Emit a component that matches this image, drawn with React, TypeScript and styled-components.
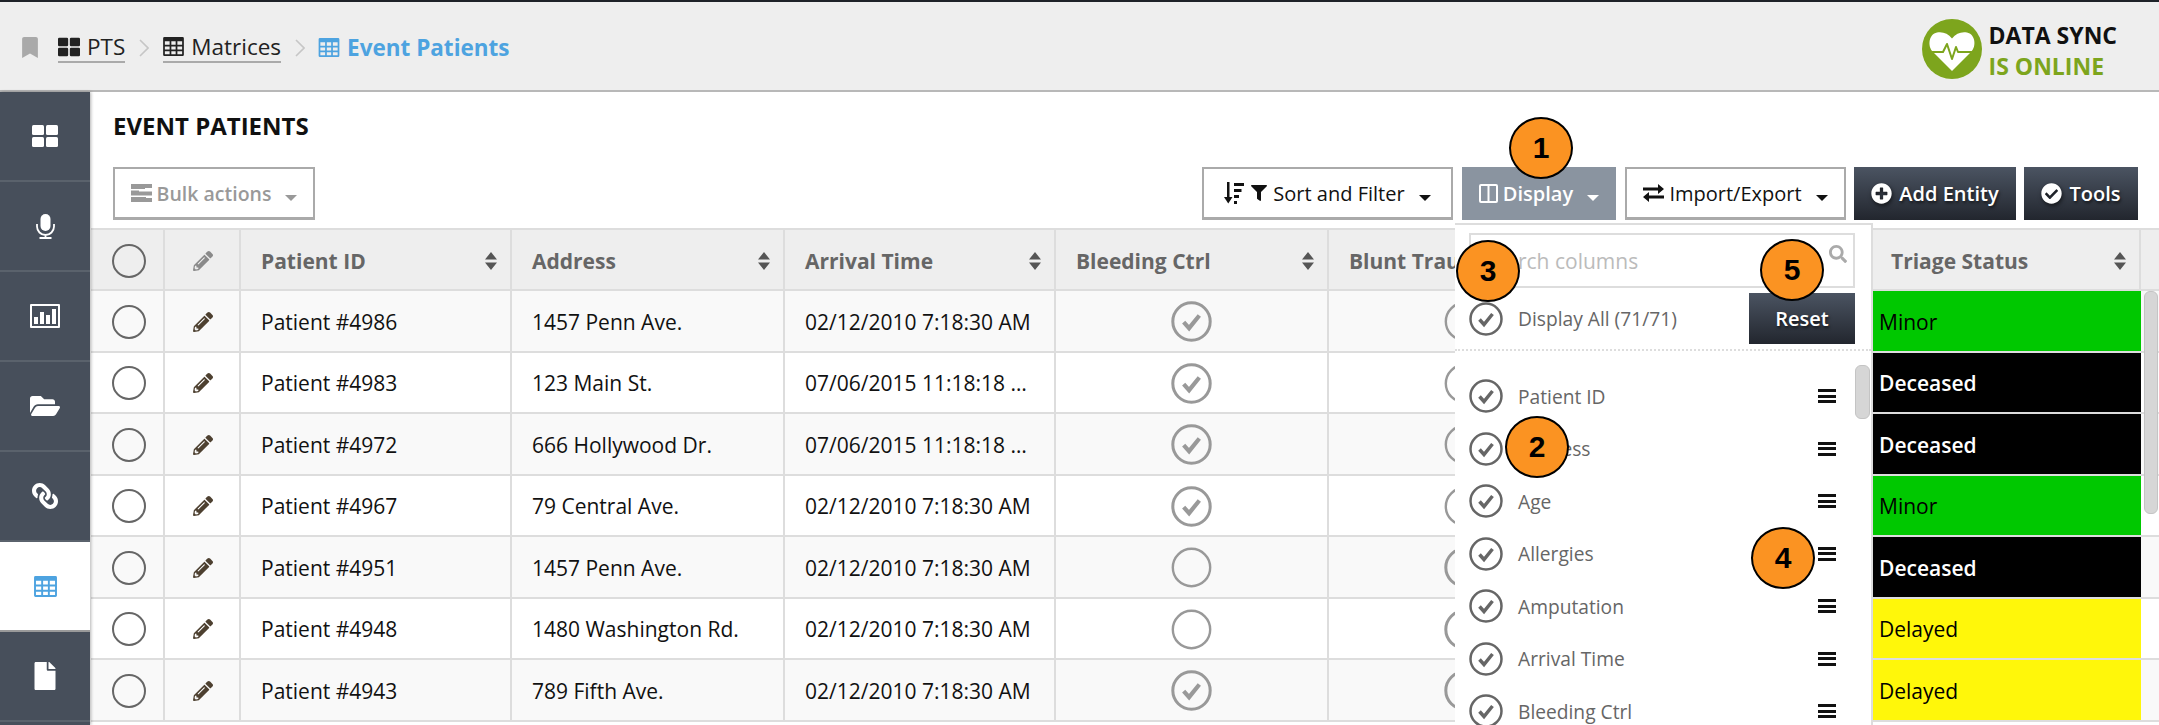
import React from 'react';
import styled, { createGlobalStyle } from 'styled-components';
import {
  FaBookmark,
  FaCheckCircle,
  FaFile,
  FaFilter,
  FaFolderOpen,
  FaLink,
  FaPencilAlt,
  FaPlusCircle,
  FaSearch,
} from 'react-icons/fa';

const COLUMNS = '74px 76px 271px 273px 271px 273px 272px 272px 268px 18px';

const GlobalStyle = createGlobalStyle`
  html, body { margin: 0; padding: 0; background: #fff; }
  body { font-family: "Open Sans", "Liberation Sans", sans-serif; }
  * { box-sizing: border-box; }
`;

const Page = styled.div`
  position: relative;
  width: 2159px;
  height: 725px;
  overflow: hidden;
  background: #fff;
`;

/* ---------- top bar ---------- */
const TopBar = styled.header`
  height: 92px;
  display: flex;
  align-items: center;
  justify-content: space-between;
  padding: 0 42px 0 21px;
  background: #eee;
  border-top: 2px solid #1e2228;
  border-bottom: 2px solid #b8b8b8;
`;

const Breadcrumbs = styled.nav`
  display: flex;
  align-items: center;
  height: 46px;
  margin-top: 3px;
`;

const BookmarkMark = styled(FaBookmark)`
  width: 18px;
  height: 21px;
  color: #a9a9a9;
  margin-right: 19px;
`;

const Crumb = styled.a`
  display: flex;
  align-items: center;
  gap: 7px;
  height: 30px;
  font-size: 22.5px;
  color: #222;
  border-bottom: 2px solid #aaa;
`;

const CrumbSep = styled.svg`
  width: 10px;
  height: 18px;
  margin: 0 14px;
  fill: none;
  stroke: #c6c6c6;
  stroke-width: 1.6;
`;

const CurrentCrumb = styled.span`
  display: flex;
  align-items: center;
  gap: 7px;
  margin-left: -1px;
  font-size: 22.5px;
  font-weight: 700;
  color: #4da3e0;
`;

const SyncBadge = styled.div`
  display: flex;
  align-items: center;
  gap: 7px;
  margin-top: 6px;
`;

const SyncText = styled.div`
  padding-top: 3px;
  font-size: 23px;
  font-weight: 700;
  line-height: 31px;
  color: #111;
`;

const SyncState = styled.div`
  color: #7da51d;
`;

/* ---------- sidebar ---------- */
const Body = styled.div`
  display: flex;
  height: 633px;
`;

const Sidebar = styled.aside`
  flex: 0 0 90px;
  background: #474f5b;
  box-shadow: 1px 0 3px rgba(0, 0, 0, 0.3);
  z-index: 1;
`;

const SideItem = styled.div<{ $active?: boolean }>`
  height: 90px;
  display: flex;
  align-items: center;
  justify-content: center;
  border-bottom: 2px solid ${p => (p.$active ? '#9a9a9a' : '#5a626c')};
  background: ${p => (p.$active ? '#fff' : 'transparent')};
  color: ${p => (p.$active ? '#4da3e0' : '#fff')};
`;

const ChainIcon = styled(FaLink)`
  width: 26px;
  height: 26px;
  transform: scaleX(-1);
`;

/* ---------- main ---------- */
const Main = styled.main`
  flex: 1;
  margin-left: 1px;
  min-width: 0;
`;

const PageTitle = styled.h1`
  height: 66px;
  margin: 0;
  padding-left: 22px;
  display: flex;
  align-items: center;
  font-size: 24px;
  font-weight: 700;
  color: #111;
`;

const Toolbar = styled.div`
  display: flex;
  justify-content: space-between;
  margin-top: 9px;
  padding: 0 21px 0 22px;
`;

const ToolGroup = styled.div`
  display: flex;
  gap: 8px;
`;

const OutlineButton = styled.button<{ $w: number; $muted?: boolean }>`
  width: ${p => p.$w}px;
  height: 53px;
  display: flex;
  align-items: center;
  justify-content: center;
  gap: 5px;
  padding: 0;
  background: #fff;
  border: 2px solid #aaa;
  border-bottom-width: 3px;
  font-family: inherit;
  font-size: ${p => (p.$muted ? 19.5 : 20)}px;
  font-weight: ${p => (p.$muted ? 600 : 400)};
  color: ${p => (p.$muted ? '#999' : '#111')};
`;

const ActiveButton = styled(OutlineButton)`
  background: #8a94a0;
  border-color: #8a94a0;
  color: #fff;
  font-weight: 600;
  margin: 0 1px;
`;

const DarkButton = styled.button<{ $w: number }>`
  width: ${p => p.$w}px;
  height: 53px;
  display: flex;
  align-items: center;
  justify-content: center;
  gap: 7px;
  padding: 0;
  border: 0;
  background: linear-gradient(#4b5462, #22262e);
  font-family: inherit;
  font-size: 20px;
  font-weight: 600;
  color: #fff;
  text-shadow: 1px 2px 3px rgba(0, 0, 0, 0.6);
  svg { filter: drop-shadow(1px 2px 2px rgba(0, 0, 0, 0.6)); }
`;

const FilterIcon = styled(FaFilter)`
  width: 16px;
  height: 16px;
  margin: 0 1px 0 2px;
`;

const Caret = styled.i<{ $color?: string }>`
  width: 0;
  height: 0;
  margin: 9px 0 0 9px;
  border-left: 6px solid transparent;
  border-right: 6px solid transparent;
  border-top: 6px solid ${p => p.$color || '#111'};
`;

/* ---------- table ---------- */
const Table = styled.div`
  margin-top: 8px;
  border-top: 2px solid #ddd;
`;

const HeaderRow = styled.div`
  display: grid;
  grid-template-columns: ${COLUMNS};
  height: 61px;
  background: #eee;
  border-bottom: 2px solid #ddd;
`;

const Row = styled.div<{ $odd: boolean }>`
  display: grid;
  grid-template-columns: ${COLUMNS};
  height: 61.5px;
  background: ${p => (p.$odd ? '#f9f9f9' : '#fff')};
  border-bottom: 2px solid #ddd;
`;

const Cell = styled.div<{ $center?: boolean }>`
  display: flex;
  align-items: center;
  justify-content: ${p => (p.$center ? 'center' : 'flex-start')};
  min-width: 0;
  padding: ${p => (p.$center ? '2px 0 0' : '2px 20px 0')};
  border-right: 2px solid #ddd;
  font-size: 21px;
  color: #111;
`;

const EdgeCell = styled.div``;

const CellText = styled.span`
  overflow: hidden;
  white-space: nowrap;
  text-overflow: ellipsis;
`;

const HeadCell = styled(Cell)`
  justify-content: space-between;
  padding-right: 12px;
  font-weight: 700;
  color: #666;
`;

const TriageHead = styled(HeadCell)`
  padding-left: 18px;
`;

const HeadLabel = styled.span`
  white-space: nowrap;
`;

const SortArrows = styled.svg`
  flex: none;
  width: 14px;
  height: 18px;
  fill: #555;
`;

const EditIcon = styled(FaPencilAlt)<{ $muted?: boolean }>`
  width: 20px;
  height: 20px;
  margin-left: 2px;
  color: ${p => (p.$muted ? '#8a8a8a' : '#4d4030')};
`;

const RadioCircle = styled.span`
  width: 34px;
  height: 34px;
  margin-left: 3px;
  border-radius: 50%;
  border: 2.5px solid #666;
`;

const StatusCell = styled.div<{ $bg: string; $fg: string }>`
  display: flex;
  align-items: center;
  padding: 2px 0 0 6px;
  font-size: 21px;
  background: ${p => p.$bg};
  color: ${p => p.$fg};
  font-weight: ${p => (p.$fg === '#fff' ? 600 : 400)};
`;

const TableScroll = styled.div`
  position: absolute;
  left: 2144px;
  top: 291px;
  width: 14px;
  height: 223px;
  border-radius: 6px;
  background: #d6d6d6;
  border: 1px solid #c4c4c4;
`;

/* ---------- column chooser ---------- */
const ColumnMenu = styled.div`
  position: absolute;
  left: 1455px;
  top: 223px;
  width: 418px;
  height: 520px;
  padding: 8px 16px 0 14px;
  background: #fff;
  border: 2px solid #ddd;
  border-left: 0;
  z-index: 2;
`;

const SearchBox = styled.div`
  position: relative;
  height: 55px;
`;

const SearchInput = styled.input`
  width: 100%;
  height: 100%;
  padding: 0 34px 0 12px;
  border: 2px solid #ddd;
  font-family: inherit;
  font-size: 21px;
  background: #fff;
  &::placeholder { color: #bbb; opacity: 1; }
`;

const SearchGlyph = styled(FaSearch)`
  position: absolute;
  right: 8px;
  top: 12px;
  width: 18px;
  height: 18px;
  color: #aaa;
`;

const DisplayAllRow = styled.div`
  display: flex;
  align-items: center;
  margin-top: 5px;
  height: 51px;
`;

const MenuLabel = styled.span`
  flex: 1;
  margin-left: 15px;
  color: #666;
  font-size: 19.2px;
`;

const ResetButton = styled(DarkButton)`
  height: 51px;
`;

const DottedRule = styled.div`
  margin: 5px -16px 0 -14px;
  border-top: 2px dotted #ddd;
`;

const ColumnList = styled.ul`
  list-style: none;
  margin: 19px 0 0;
  padding: 0;
`;

const ColumnItem = styled.li`
  display: flex;
  align-items: center;
  height: 52.5px;
  padding-right: 19px;
`;

const Hamburger = styled.span`
  width: 18px;
  height: 14px;
  display: flex;
  flex-direction: column;
  justify-content: space-between;
  i {
    height: 3px;
    background: #111;
  }
`;

const MenuScroll = styled.div`
  position: absolute;
  left: 400px;
  top: 140px;
  width: 15px;
  height: 54px;
  border-radius: 6px;
  background: #d6d6d6;
  border: 1px solid #c4c4c4;
`;

/* ---------- numbered callouts ---------- */
const Callout = styled.div<{ $x: number; $y: number }>`
  position: absolute;
  left: ${p => p.$x - 32}px;
  top: ${p => p.$y - 31}px;
  width: 64px;
  height: 62px;
  display: flex;
  align-items: center;
  justify-content: center;
  border-radius: 50%;
  background: #fb9322;
  border: 2px solid #000;
  font-family: "Liberation Sans", Arial, sans-serif;
  font-size: 30px;
  font-weight: 700;
  color: #000;
  z-index: 3;
`;

/* ---------- drawn icons ---------- */
const ThLarge = ({ size = 26, h = 22 }: { size?: number; h?: number }) => (
  <svg width={size} height={h} viewBox="0 0 26 22" fill="currentColor">
    <rect x="0" y="0" width="12" height="10" rx="1.5" />
    <rect x="14" y="0" width="12" height="10" rx="1.5" />
    <rect x="0" y="12" width="12" height="10" rx="1.5" />
    <rect x="14" y="12" width="12" height="10" rx="1.5" />
  </svg>
);

const GridIcon = ({ w = 24, h = 22 }: { w?: number; h?: number }) => (
  <svg width={w} height={h} viewBox="0 0 24 22" fill="currentColor">
    <path
      fillRule="evenodd"
      d="M1.5 0h21A1.5 1.5 0 0 1 24 1.5v19a1.5 1.5 0 0 1-1.5 1.5h-21A1.5 1.5 0 0 1 0 20.5v-19A1.5 1.5 0 0 1 1.5 0zM2 5v4h5.5V5zm7.5 0v4h5V5zm7 0v4H22V5zM2 11v3.500h5.500V11zm7.500 0v3.500h5V11zm7 0v3.500H22V11zM2 16.500V20h5.500v-3.500zm7.500 0V20h5v-3.500zm7 0V20H22v-3.500z"
    />
  </svg>
);

const MicIcon = () => (
  <svg width="19" height="25" viewBox="0 0 19 25" fill="none" stroke="#fff" strokeWidth="1.8">
    <rect x="4.500" y="0" width="10" height="17" rx="5" fill="#fff" stroke="none" />
    <path d="M1 10v2.500a8.500 8.500 0 0 0 17 0V10M9.500 21v3M3.500 24h12" />
  </svg>
);

const StatsIcon = () => (
  <svg width="30" height="24" viewBox="0 0 30 24" fill="#fff">
    <path
      fillRule="evenodd"
      d="M1 0h28a1 1 0 0 1 1 1v22a1 1 0 0 1-1 1H1a1 1 0 0 1-1-1V1a1 1 0 0 1 1-1zm1 2v20h26V2z"
    />
    <rect x="4" y="13" width="4" height="7" />
    <rect x="10" y="8" width="4" height="12" />
    <rect x="16" y="11" width="4" height="9" />
    <rect x="22" y="5" width="4" height="15" />
  </svg>
);

const SortFilterIcon = () => (
  <svg width="20" height="22" viewBox="0 0 20 22" fill="#111">
    <rect x="3" y="0" width="2.500" height="18" />
    <path d="M0 15h8.500l-4.250 6.500z" />
    <rect x="10" y="1" width="10" height="3" />
    <rect x="10" y="7" width="7.500" height="3" />
    <rect x="10" y="13" width="5" height="3" />
    <rect x="10" y="19" width="3" height="3" />
  </svg>
);

const ColumnsIcon = () => (
  <svg width="19" height="19" viewBox="0 0 19 19" fill="none" stroke="#fff" strokeWidth="2">
    <rect x="1" y="1" width="17" height="17" rx="1" />
    <path d="M9.500 1v17" />
  </svg>
);

const TransferIcon = () => (
  <svg width="21" height="18" viewBox="0 0 21 18" fill="#111">
    <path d="M0 3.500h15V0l6 5-6 5V6.500H0z" />
    <path d="M21 11.500H6V8l-6 5 6 5v-3.500h15z" />
  </svg>
);

const BulkIcon = () => (
  <svg width="21" height="18" viewBox="0 0 21 18" fill="#999">
    <path d="M0 0h21v4H14v1H0zM0 6.500h8v1h13v4H0zM0 13h15v1h6v4H0z" />
  </svg>
);

const CheckCircle = ({ tone, size }: { tone: string; size: number }) => (
  <svg width={size} height={size} viewBox="0 0 34 34" fill="none">
    <circle cx="17" cy="17" r="15.500" stroke={tone} strokeWidth="2.500" />
    <path d="M10.500 17.500l4.500 5 8.500-10.500" stroke={tone} strokeWidth="3.500" />
  </svg>
);

const SyncLogo = () => (
  <svg width="60" height="60" viewBox="0 0 60 60">
    <circle cx="30" cy="30" r="30" fill="#7da51d" />
    <path
      d="M30 52L11 33C5 27 7 15 15 13.500c6-1 11 1 15 6 4-5 9-7 15-6 8 1.500 10 13.500 4 19.500z"
      fill="#fff"
    />
    <path
      d="M8 33h13l4-8 5 15 4-12 2 5h16"
      fill="none"
      stroke="#7da51d"
      strokeWidth="2"
      strokeLinejoin="round"
    />
  </svg>
);

const SortIcon = () => (
  <SortArrows viewBox="0 0 14 18">
    <path d="M7 0l6 7.500H1zM7 18l-6-7.500h12z" />
  </SortArrows>
);

interface PatientRow {
  id: string;
  address: string;
  arrival: string;
  bleeding: boolean;
  blunt: boolean;
  status: 'Minor' | 'Deceased' | 'Delayed';
}

const patients: PatientRow[] = [
  { id: 'Patient #4986', address: '1457 Penn Ave.', arrival: '02/12/2010 7:18:30 AM', bleeding: true, blunt: false, status: 'Minor' },
  { id: 'Patient #4983', address: '123 Main St.', arrival: '07/06/2015 11:18:18 AM', bleeding: true, blunt: false, status: 'Deceased' },
  { id: 'Patient #4972', address: '666 Hollywood Dr.', arrival: '07/06/2015 11:18:18 AM', bleeding: true, blunt: false, status: 'Deceased' },
  { id: 'Patient #4967', address: '79 Central Ave.', arrival: '02/12/2010 7:18:30 AM', bleeding: true, blunt: false, status: 'Minor' },
  { id: 'Patient #4951', address: '1457 Penn Ave.', arrival: '02/12/2010 7:18:30 AM', bleeding: false, blunt: true, status: 'Deceased' },
  { id: 'Patient #4948', address: '1480 Washington Rd.', arrival: '02/12/2010 7:18:30 AM', bleeding: false, blunt: true, status: 'Delayed' },
  { id: 'Patient #4943', address: '789 Fifth Ave.', arrival: '02/12/2010 7:18:30 AM', bleeding: true, blunt: true, status: 'Delayed' },
];

const statusColors = {
  Minor: { bg: '#00c800', fg: '#000' },
  Deceased: { bg: '#000', fg: '#fff' },
  Delayed: { bg: '#fff70a', fg: '#000' },
};

const headLabels = ['Patient ID', 'Address', 'Arrival Time', 'Bleeding Ctrl', 'Blunt Trauma'];
const menuColumns = ['Patient ID', 'Address', 'Age', 'Allergies', 'Amputation', 'Arrival Time', 'Bleeding Ctrl'];

const FlagCell = ({ on }: { on: boolean }) => (
  <Cell $center>
    {on ? (
      <CheckCircle tone="#999" size={41} />
    ) : (
      <svg width="41" height="41" viewBox="0 0 34 34" fill="none">
        <circle cx="17" cy="17" r="15.500" stroke="#999" strokeWidth="2" />
      </svg>
    )}
  </Cell>
);

export default function App() {
  return (
    <Page>
      <GlobalStyle />
      <TopBar>
        <Breadcrumbs>
          <BookmarkMark />
          <Crumb>
            <ThLarge size={22} h={22} />
            PTS
          </Crumb>
          <CrumbSep viewBox="0 0 10 18">
            <path d="M1 1l8 8-8 8" />
          </CrumbSep>
          <Crumb>
            <GridIcon w={21} h={19} />
            Matrices
          </Crumb>
          <CrumbSep viewBox="0 0 10 18">
            <path d="M1 1l8 8-8 8" />
          </CrumbSep>
          <CurrentCrumb>
            <GridIcon w={22} h={19} />
            Event Patients
          </CurrentCrumb>
        </Breadcrumbs>
        <SyncBadge>
          <SyncLogo />
          <SyncText>
            DATA SYNC
            <SyncState>IS ONLINE</SyncState>
          </SyncText>
        </SyncBadge>
      </TopBar>

      <Body>
        <Sidebar>
          <SideItem>
            <ThLarge />
          </SideItem>
          <SideItem>
            <MicIcon />
          </SideItem>
          <SideItem>
            <StatsIcon />
          </SideItem>
          <SideItem>
            <FaFolderOpen size={30} />
          </SideItem>
          <SideItem>
            <ChainIcon />
          </SideItem>
          <SideItem $active>
            <GridIcon w={25} h={21} />
          </SideItem>
          <SideItem>
            <FaFile size={28} />
          </SideItem>
        </Sidebar>

        <Main>
          <PageTitle>EVENT PATIENTS</PageTitle>
          <Toolbar>
            <OutlineButton $w={202} $muted>
              <BulkIcon />
              Bulk actions
              <Caret $color="#999" />
            </OutlineButton>
            <ToolGroup>
              <OutlineButton $w={251}>
                <SortFilterIcon />
                <FilterIcon />
                Sort and Filter
                <Caret />
              </OutlineButton>
              <ActiveButton $w={154}>
                <ColumnsIcon />
                Display
                <Caret $color="#fff" />
              </ActiveButton>
              <OutlineButton $w={221}>
                <TransferIcon />
                Import/Export
                <Caret />
              </OutlineButton>
              <DarkButton $w={162}>
                <FaPlusCircle size={21} />
                Add Entity
              </DarkButton>
              <DarkButton $w={114}>
                <FaCheckCircle size={21} />
                Tools
              </DarkButton>
            </ToolGroup>
          </Toolbar>

          <Table>
            <HeaderRow>
              <Cell $center>
                <RadioCircle />
              </Cell>
              <Cell $center>
                <EditIcon $muted />
              </Cell>
              {headLabels.map(label => (
                <HeadCell key={label}>
                  <HeadLabel>{label}</HeadLabel>
                  <SortIcon />
                </HeadCell>
              ))}
              <HeadCell />
              <TriageHead>
                <HeadLabel>Triage Status</HeadLabel>
                <SortIcon />
              </TriageHead>
              <EdgeCell />
            </HeaderRow>
            {patients.map((p, i) => (
              <Row key={p.id} $odd={i % 2 === 0}>
                <Cell $center>
                  <RadioCircle />
                </Cell>
                <Cell $center>
                  <EditIcon />
                </Cell>
                <Cell>
                  <CellText>{p.id}</CellText>
                </Cell>
                <Cell>
                  <CellText>{p.address}</CellText>
                </Cell>
                <Cell>
                  <CellText>{p.arrival}</CellText>
                </Cell>
                <FlagCell on={p.bleeding} />
                <FlagCell on={p.blunt} />
                <Cell />
                <StatusCell $bg={statusColors[p.status].bg} $fg={statusColors[p.status].fg}>
                  {p.status}
                </StatusCell>
                <EdgeCell />
              </Row>
            ))}
          </Table>
        </Main>
      </Body>

      <TableScroll />

      <ColumnMenu>
        <SearchBox>
          <SearchInput placeholder="Search columns" readOnly />
          <SearchGlyph />
        </SearchBox>
        <DisplayAllRow>
          <CheckCircle tone="#666" size={34} />
          <MenuLabel>Display All (71/71)</MenuLabel>
          <ResetButton $w={106}>Reset</ResetButton>
        </DisplayAllRow>
        <DottedRule />
        <ColumnList>
          {menuColumns.map(name => (
            <ColumnItem key={name}>
              <CheckCircle tone="#666" size={34} />
              <MenuLabel>{name}</MenuLabel>
              <Hamburger>
                <i />
                <i />
                <i />
              </Hamburger>
            </ColumnItem>
          ))}
        </ColumnList>
        <MenuScroll />
      </ColumnMenu>

      <Callout $x={1541} $y={148}>1</Callout>
      <Callout $x={1537} $y={447}>2</Callout>
      <Callout $x={1488} $y={271}>3</Callout>
      <Callout $x={1783} $y={558}>4</Callout>
      <Callout $x={1792} $y={270}>5</Callout>
    </Page>
  );
}
